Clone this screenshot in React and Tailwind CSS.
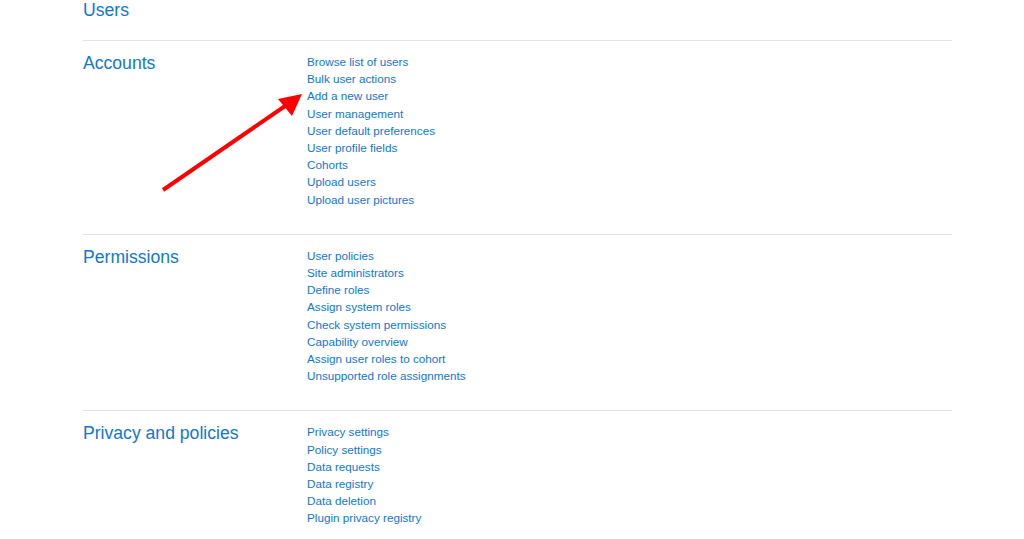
import React from 'react';

const sections = [
  {
    title: 'Accounts',
    links: [
      'Browse list of users',
      'Bulk user actions',
      'Add a new user',
      'User management',
      'User default preferences',
      'User profile fields',
      'Cohorts',
      'Upload users',
      'Upload user pictures',
    ],
  },
  {
    title: 'Permissions',
    links: [
      'User policies',
      'Site administrators',
      'Define roles',
      'Assign system roles',
      'Check system permissions',
      'Capability overview',
      'Assign user roles to cohort',
      'Unsupported role assignments',
    ],
  },
  {
    title: 'Privacy and policies',
    links: [
      'Privacy settings',
      'Policy settings',
      'Data requests',
      'Data registry',
      'Data deletion',
      'Plugin privacy registry',
    ],
  },
];

const Arrow = () => (
  <svg className="absolute left-0 top-0 pointer-events-none" width="1024" height="539">
    <line x1="163" y1="190" x2="288" y2="104" stroke="#ff0000" strokeWidth="4" />
    <polygon points="302,94 278,99 292,116" fill="#ff0000" />
  </svg>
);

export default function App() {
  return (
    <div className="relative w-[1024px] h-[539px] overflow-hidden bg-white font-['Liberation_Sans',Arial,sans-serif] text-[#1177d1]">
      <div className="ml-[83px] w-[869px]">
        <h2 className="text-[17.6px] leading-[21px] mb-[19px]">Users</h2>
        {sections.map((s) => (
          <div key={s.title} className="flex border-t border-[#e3e3e3] pt-[12px] pb-[26px]">
            <h3 className="w-[224px] shrink-0 text-[17.6px] leading-[21px]">{s.title}</h3>
            <ul className="flex flex-col">
              {s.links.map((l) => (
                <li key={l}>
                  <a href="#" className="text-[11.7px] leading-[17.2px] block">{l}</a>
                </li>
              ))}
            </ul>
          </div>
        ))}
      </div>
      <Arrow />
    </div>
  );
}
